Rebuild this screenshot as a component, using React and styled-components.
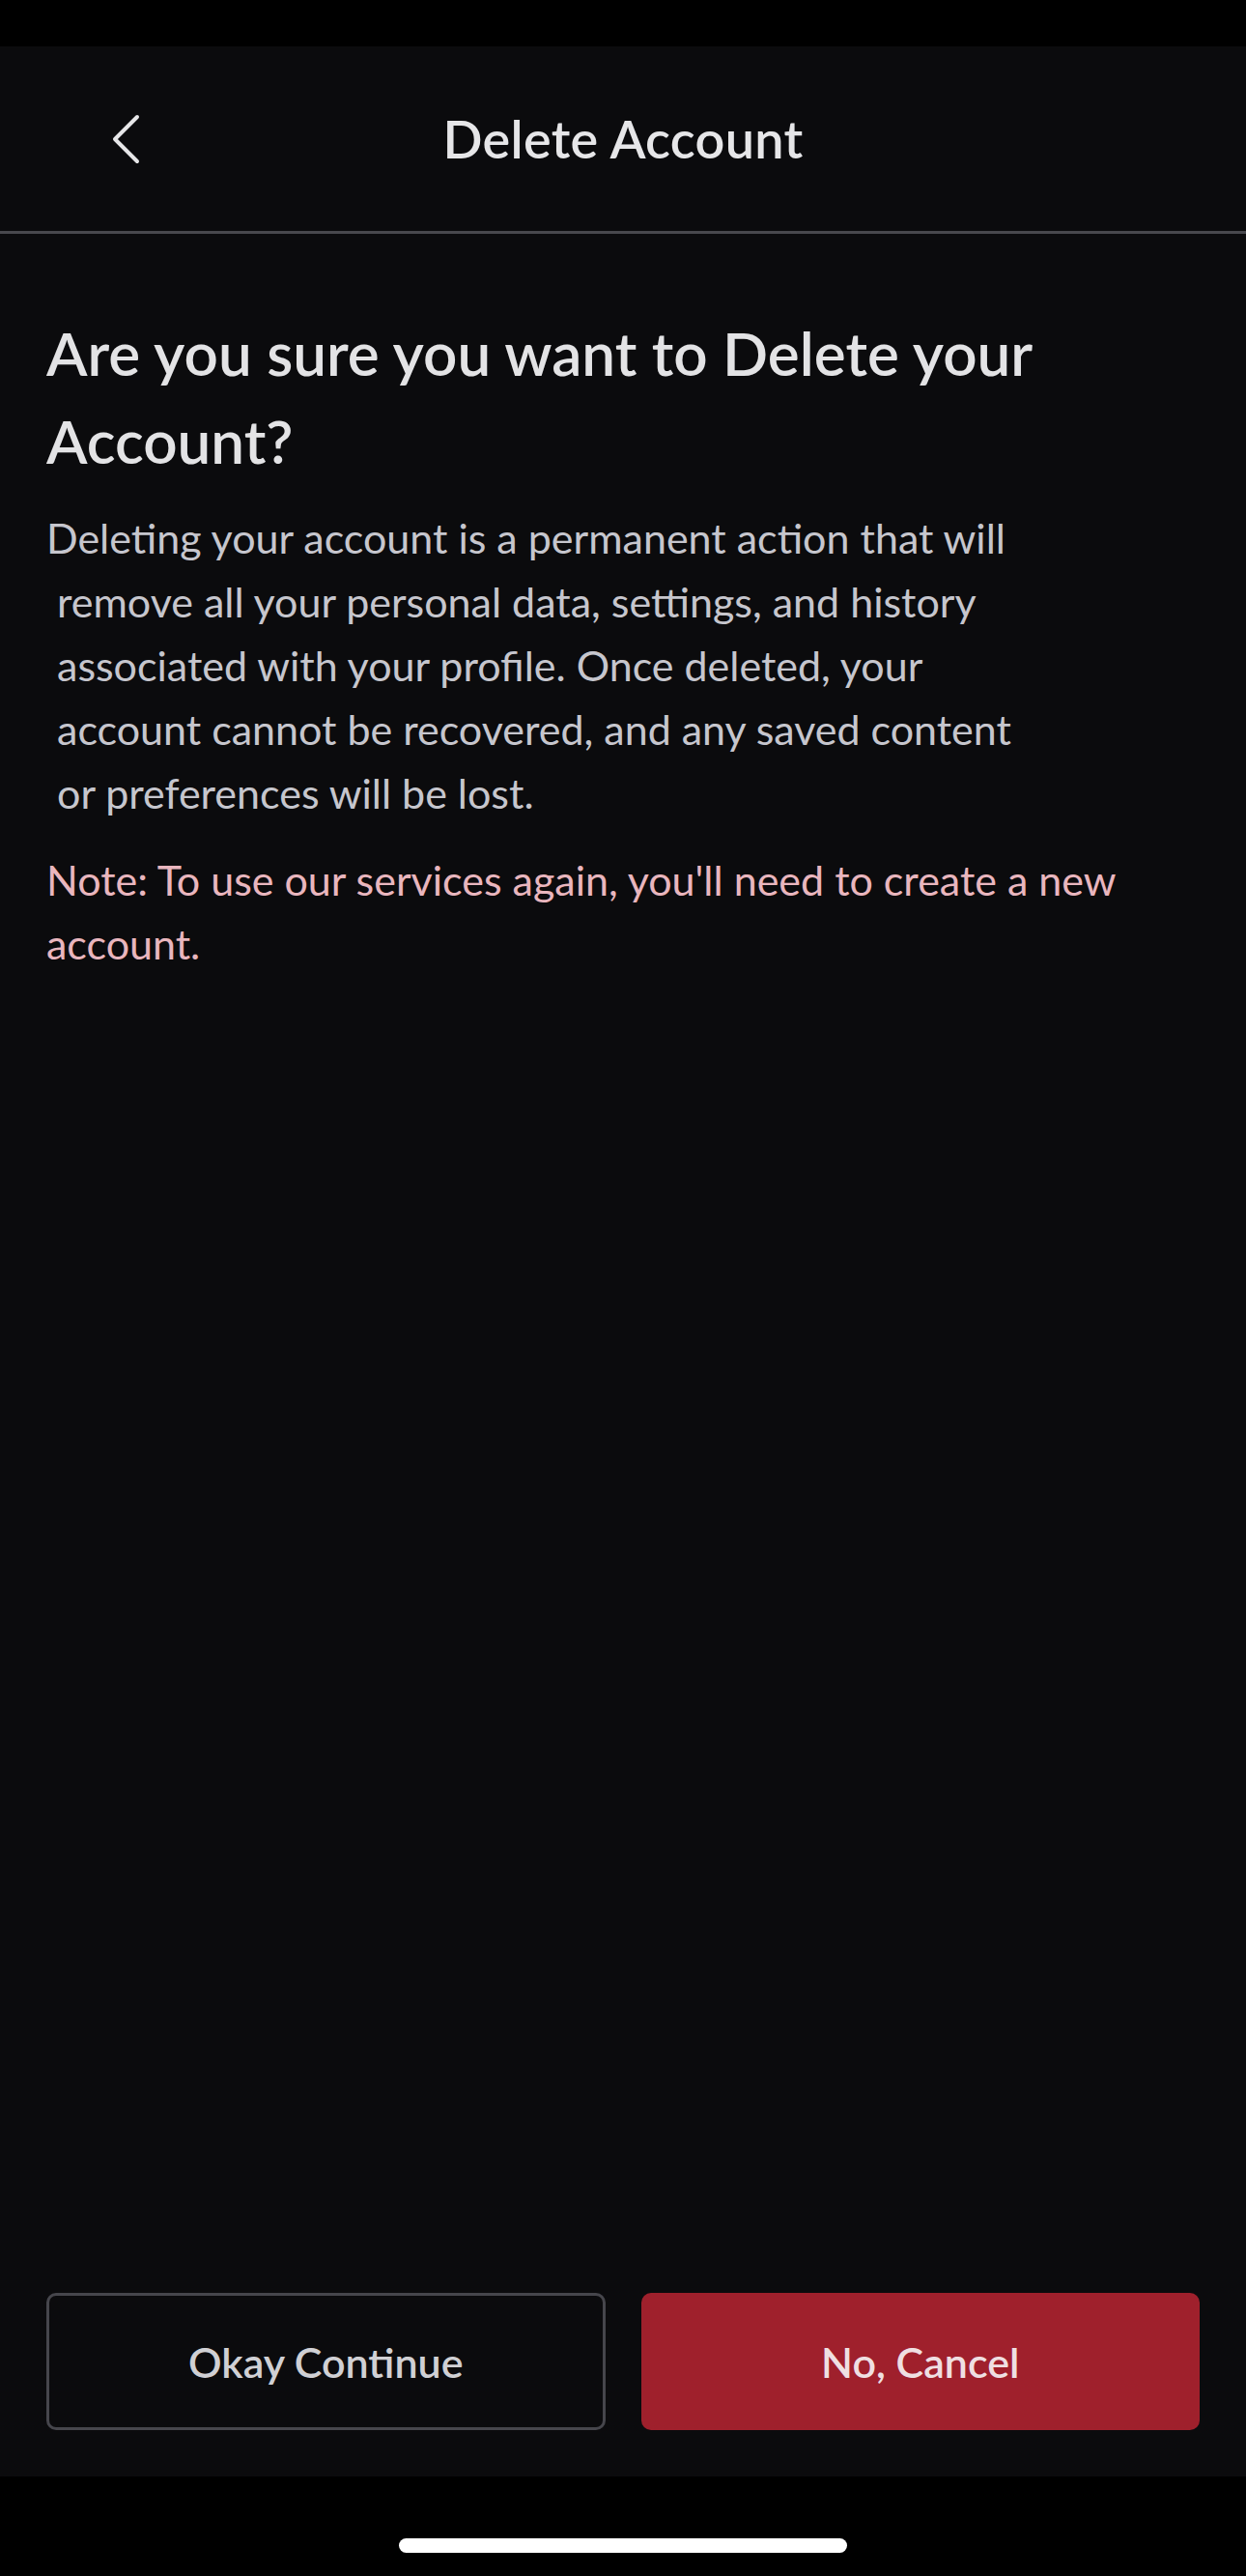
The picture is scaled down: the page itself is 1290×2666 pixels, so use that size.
import React from "react";
import styled, { createGlobalStyle } from "styled-components";

const GlobalStyle = createGlobalStyle`
  html, body {
    margin: 0;
    padding: 0;
    background: #000;
  }
  body {
    font-family: Lato, "Open Sans", sans-serif;
    -webkit-font-smoothing: antialiased;
  }
  * {
    box-sizing: border-box;
  }
`;

const Screen = styled.div`
  width: 1290px;
  height: 2666px;
  display: flex;
  flex-direction: column;
  background: #000;
`;

const StatusBar = styled.div`
  height: 48px;
  flex-shrink: 0;
  background: #000;
`;

const Page = styled.div`
  flex: 1;
  display: flex;
  flex-direction: column;
  background: #0b0b0d;
`;

const Header = styled.header`
  position: relative;
  height: 194px;
  flex-shrink: 0;
  display: flex;
  align-items: center;
  justify-content: center;
  border-bottom: 3px solid #48484d;
`;

const BackButton = styled.button`
  position: absolute;
  left: 100px;
  top: 50%;
  transform: translateY(-50%);
  width: 60px;
  height: 70px;
  padding: 0;
  border: none;
  background: transparent;
  display: flex;
  align-items: center;
  justify-content: center;
  cursor: pointer;
`;

const HeaderTitle = styled.h1`
  margin: 0;
  font-size: 54px;
  font-weight: 600;
  color: #e6e6e8;
  letter-spacing: 0.3px;
`;

const Content = styled.main`
  flex: 1;
  padding: 78px 48px 0;
`;

const Question = styled.h2`
  margin: 0 0 22px;
  font-size: 62px;
  line-height: 91px;
  font-weight: 600;
  color: #e3e3e5;
`;

const Paragraph = styled.p`
  margin: 0;
  font-size: 43px;
  line-height: 66px;
  font-weight: 400;
  white-space: pre-wrap;
  color: ${({ $tone }) => ($tone === "note" ? "#e9b6be" : "#c6c6cd")};
  margin-top: ${({ $tone }) => ($tone === "note" ? "24px" : "0")};
`;

const Footer = styled.div`
  display: grid;
  grid-template-columns: 1fr 1fr;
  gap: 37px;
  padding: 0 48px 48px;
`;

const ActionButton = styled.button`
  height: 142px;
  border-radius: 10px;
  font-family: Lato, "Open Sans", sans-serif;
  font-size: 43px;
  font-weight: 600;
  cursor: pointer;
  border: ${({ $variant }) =>
    $variant === "danger" ? "none" : "3px solid #46464c"};
  background: ${({ $variant }) =>
    $variant === "danger" ? "#9f202c" : "#0b0b0d"};
  color: ${({ $variant }) => ($variant === "danger" ? "#efdfe2" : "#d0d0d4")};
`;

const HomeArea = styled.div`
  height: 103px;
  flex-shrink: 0;
  background: #000;
  display: flex;
  justify-content: center;
  padding-top: 64px;
`;

const HomeIndicator = styled.div`
  width: 464px;
  height: 15px;
  border-radius: 8px;
  background: #fff;
`;

const bodyText = `Deleting your account is a permanent action that will
 remove all your personal data, settings, and history
 associated with your profile. Once deleted, your
 account cannot be recovered, and any saved content
 or preferences will be lost.`;

const App = () => {
  return (
    <>
      <GlobalStyle />
      <Screen>
        <StatusBar />
        <Page>
          <Header>
            <BackButton aria-label="Back">
              <svg width="30" height="52" viewBox="0 0 30 52" fill="none">
                <path
                  d="M27 3 L4 26 L27 49"
                  stroke="#e6e6e8"
                  strokeWidth="4"
                  strokeLinecap="round"
                  strokeLinejoin="round"
                />
              </svg>
            </BackButton>
            <HeaderTitle>Delete Account</HeaderTitle>
          </Header>

          <Content>
            <Question>Are you sure you want to Delete your Account?</Question>
            <Paragraph>{bodyText}</Paragraph>
            <Paragraph $tone="note">
              Note: To use our services again, you'll need to create a new
              account.
            </Paragraph>
          </Content>

          <Footer>
            <ActionButton>Okay Continue</ActionButton>
            <ActionButton $variant="danger">No, Cancel</ActionButton>
          </Footer>
        </Page>
        <HomeArea>
          <HomeIndicator />
        </HomeArea>
      </Screen>
    </>
  );
};

export default App;
